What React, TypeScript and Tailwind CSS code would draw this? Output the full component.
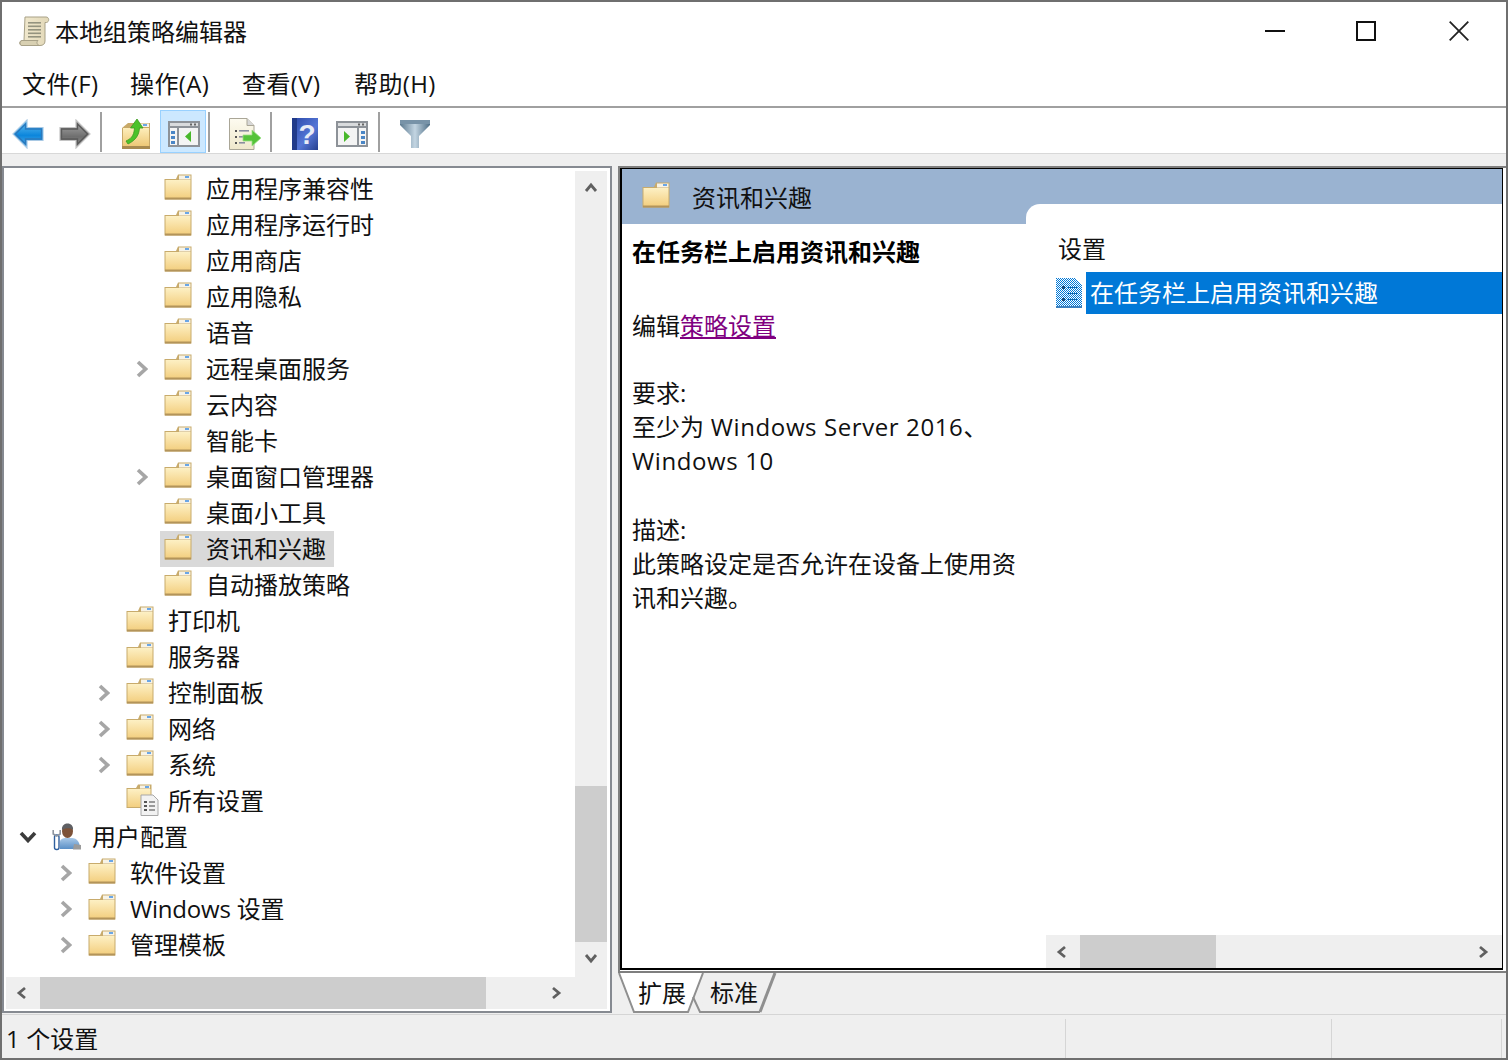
import React from "react";

const FONT = "font-['Open_Sans','Noto_Sans_CJK_SC',sans-serif]";

function Folder({ id = "f" }: { id?: string }) {
  return (
    <svg width="28" height="26" viewBox="0 0 28 26" className="shrink-0 block">
      <defs>
        <linearGradient id={id} x1="0" y1="0" x2="0" y2="1">
          <stop offset="0" stopColor="#fdf0c4" />
          <stop offset="1" stopColor="#f3cf80" />
        </linearGradient>
      </defs>
      <path d="M14 0.5H27.5V25.5H0.5V5H12Z" fill="#c8ab6c" />
      <rect x="15" y="1.5" width="11.5" height="4" fill="#f7f3e6" />
      <rect x="21" y="2" width="4" height="2" fill="#6aa6e6" />
      <path d="M1.5 6H13L15.5 6H26.5V24H1.5Z" fill={`url(#${id})`} />
      <rect x="1" y="23.5" width="26" height="2" fill="#b3945a" />
    </svg>
  );
}

function Chevron({ open, dim = true }: { open?: boolean; dim?: boolean }) {
  if (open)
    return (
      <svg width="18" height="12" viewBox="0 0 18 12" className="block">
        <path d="M2 2L9 9.5L16 2" fill="none" stroke="#3c3c3c" strokeWidth="3.6" />
      </svg>
    );
  return (
    <svg width="12" height="18" viewBox="0 0 12 18" className="block">
      <path d="M2 2L9.5 9L2 16" fill="none" stroke={dim ? "#a6a6a6" : "#606060"} strokeWidth="3.6" />
    </svg>
  );
}

function SmallArrow({ dir }: { dir: "l" | "r" | "u" | "d" }) {
  const d = { l: "M9 2L3 7L9 12", r: "M3 2L9 7L3 12", u: "M2 9L7 3L12 9", d: "M2 4L7 10L12 4" }[dir];
  return (
    <svg width="14" height="14" viewBox="0 0 14 14" className="block">
      <path d={d} fill="none" stroke="#606060" strokeWidth="2.8" />
    </svg>
  );
}

function AllSettingsIcon() {
  return (
    <svg width="34" height="32" viewBox="0 0 34 32" className="shrink-0 block">
      <defs>
        <linearGradient id="as" x1="0" y1="0" x2="0" y2="1">
          <stop offset="0" stopColor="#fdf0c4" />
          <stop offset="1" stopColor="#f3cf80" />
        </linearGradient>
      </defs>
      <path d="M12 0.5H25.5V24H0.5V4H10Z" fill="#c8ab6c" />
      <rect x="14" y="1.5" width="10" height="3" fill="#f7f3e6" />
      <rect x="19" y="2" width="4" height="2" fill="#6aa6e6" />
      <rect x="1.5" y="5" width="23" height="18" fill="url(#as)" />
      <path d="M15 11H27L32 16V31.5H15Z" fill="#f2f2f2" stroke="#a8a8a8" />
      <rect x="18" y="17" width="3" height="2" fill="#555" />
      <rect x="23" y="17" width="6" height="2" fill="#9a9a9a" />
      <rect x="18" y="21" width="3" height="2" fill="#555" />
      <rect x="23" y="21" width="6" height="2" fill="#9a9a9a" />
      <rect x="18" y="25" width="3" height="2" fill="#555" />
      <rect x="23" y="25" width="6" height="2" fill="#9a9a9a" />
    </svg>
  );
}

function UserIcon() {
  return (
    <svg width="30" height="30" viewBox="0 0 30 30" className="shrink-0 block">
      <defs>
        <linearGradient id="ub" x1="0" y1="0" x2="0" y2="1">
          <stop offset="0" stopColor="#a9c9e8" />
          <stop offset="1" stopColor="#5a8fc6" />
        </linearGradient>
      </defs>
      <path d="M8 28V21C8 18 11 17 14 17H20C25 17 28 21 28 28Z" fill="url(#ub)" />
      <path d="M22 23L29 24V28.5H21Z" fill="#9b9b9b" />
      <ellipse cx="15.5" cy="10" rx="5.5" ry="7" fill="#7d5238" />
      <path d="M10 9C9.5 4 13 2.5 15.5 2.5C19 2.5 21.5 5 21 9C19 6.5 13 6.5 10 9Z" fill="#5f6064" />
      <rect x="2.5" y="14" width="4.5" height="14.5" rx="2" fill="#fff" stroke="#2f5f9e" strokeWidth="1.4" />
      <path d="M1.2 9V13L4.7 15L8.2 13V9" fill="none" stroke="#8f96a0" strokeWidth="1.6" />
    </svg>
  );
}

function ScrollIcon() {
  return (
    <svg width="32" height="32" viewBox="0 0 32 32" className="block">
      <defs>
        <linearGradient id="sc" x1="0" y1="0" x2="1" y2="0">
          <stop offset="0" stopColor="#f2ead0" />
          <stop offset="1" stopColor="#e2d8b8" />
        </linearGradient>
      </defs>
      <path d="M7 2H28C31.5 2 31.5 7 28.5 7.5H27V26C27 29 25 30.5 22 30.5H4C1 30.5 1 25.5 4 25.5H6Z" fill="url(#sc)" stroke="#a8a187" />
      <path d="M4 25.5H20C18.5 27 18.5 29 21 30.5H4C1.5 30.5 1.5 26 4 25.5Z" fill="#d8d0b2" stroke="#a8a187" />
      <g fill="#94937f">
        <rect x="10" y="7" width="13" height="1.6" />
        <rect x="10" y="10.5" width="13" height="1.6" />
        <rect x="10" y="14" width="13" height="1.6" />
        <rect x="10" y="17.5" width="13" height="1.6" />
        <rect x="10" y="21" width="13" height="1.6" />
      </g>
    </svg>
  );
}

function BackIcon() {
  return (
    <svg width="32" height="30" viewBox="0 0 32 30" className="block mr-[3px]">
      <defs>
        <linearGradient id="bk" x1="0" y1="0" x2="0" y2="1">
          <stop offset="0" stopColor="#6cc4f4" />
          <stop offset="0.55" stopColor="#0b86dc" />
          <stop offset="1" stopColor="#5fb2e8" />
        </linearGradient>
      </defs>
      <path d="M1 15L15 1V8.5H31V21.5H15V29Z" fill="url(#bk)" stroke="#a9c9e4" strokeWidth="1.2" />
      <path d="M3.5 15L13.5 5V10H29.5V20H13.5V25Z" fill="none" stroke="#2a79bd" strokeWidth="1.4" />
    </svg>
  );
}

function ForwardIcon() {
  return (
    <svg width="32" height="30" viewBox="0 0 32 30" className="block mr-[1px]">
      <defs>
        <linearGradient id="fw" x1="0" y1="0" x2="0" y2="1">
          <stop offset="0" stopColor="#b0b0b0" />
          <stop offset="0.6" stopColor="#6e6e6e" />
          <stop offset="1" stopColor="#9a9a9a" />
        </linearGradient>
      </defs>
      <path d="M31 15L17 1V8.5H1V21.5H17V29Z" fill="url(#fw)" stroke="#c4c4c4" strokeWidth="1.2" />
      <path d="M28.5 15L18.5 5V10H2.5V20H18.5V25Z" fill="none" stroke="#5a5a5a" strokeWidth="1.4" />
    </svg>
  );
}

function FolderUpIcon() {
  return (
    <svg width="28" height="30" viewBox="0 0 28 30" className="block mr-[2px]">
      <defs>
        <linearGradient id="fu" x1="0" y1="0" x2="0" y2="1">
          <stop offset="0" stopColor="#fdeebb" />
          <stop offset="1" stopColor="#eec877" />
        </linearGradient>
      </defs>
      <path d="M6 4H28V30H0V9Z" fill="#c8a968" />
      <rect x="18" y="4.5" width="9" height="3.5" fill="#f7f3e6" />
      <rect x="21" y="5" width="4" height="2" fill="#6aa6e6" />
      <rect x="1" y="9" width="26" height="18" fill="url(#fu)" />
      <rect x="0" y="27" width="28" height="3" fill="#a88a50" />
      <path d="M4 22C8 20 12 18 12.5 9H8.5L15 0L21 9H17.5C17 16 14 21 6 25Z" fill="#4cc22a" stroke="#3c9a20" strokeWidth="0.8" />
    </svg>
  );
}

function PaneIcon({ flip }: { flip?: boolean }) {
  return (
    <svg width="32" height="26" viewBox="0 0 32 26" className="block ml-[2px]">
      <rect x="0" y="0" width="32" height="26" fill="#8d9298" />
      <rect x="2" y="2" width="28" height="3" fill="#d9dbdd" />
      <rect x="22" y="2.5" width="2" height="2" fill="#666" />
      <rect x="26" y="2.5" width="2" height="2" fill="#666" />
      <rect x="2" y="7" width="28" height="17" fill="#f4f4f4" />
      {flip ? (
        <g>
          <rect x="21" y="7" width="2" height="17" fill="#8d9298" />
          <rect x="25" y="10" width="4" height="3" fill="#4a86c6" />
          <rect x="25" y="15" width="4" height="3" fill="#4a86c6" />
          <rect x="25" y="20" width="4" height="3" fill="#4a86c6" />
          <path d="M8 10L14 15.5L8 21Z" fill="#48b82a" />
        </g>
      ) : (
        <g>
          <rect x="9" y="7" width="2" height="17" fill="#8d9298" />
          <rect x="3" y="10" width="4" height="3" fill="#4a86c6" />
          <rect x="3" y="15" width="4" height="3" fill="#4a86c6" />
          <rect x="3" y="20" width="4" height="3" fill="#4a86c6" />
          <path d="M23 10L17 15.5L23 21Z" fill="#48b82a" />
        </g>
      )}
    </svg>
  );
}

function ExportIcon() {
  return (
    <svg width="32" height="32" viewBox="0 0 32 32" className="block ml-[4px]">
      <defs>
        <linearGradient id="ex" x1="0" y1="0" x2="0" y2="1">
          <stop offset="0" stopColor="#fdfbf0" />
          <stop offset="1" stopColor="#efe8cc" />
        </linearGradient>
      </defs>
      <path d="M0.5 0.5H18L25 7.5V31.5H0.5Z" fill="url(#ex)" stroke="#aaa697" />
      <path d="M18 0.5V7.5H25" fill="#d8d8d8" stroke="#aaa697" />
      <g fill="#555">
        <rect x="6" y="12" width="2" height="2" />
        <rect x="6" y="18" width="2" height="2" />
        <rect x="6" y="24" width="2" height="2" />
      </g>
      <g fill="#8b8fa0">
        <rect x="10" y="12" width="10" height="1.6" />
        <rect x="10" y="18" width="6" height="1.6" />
        <rect x="10" y="24" width="6" height="1.6" />
      </g>
      <path d="M14 17H23V12L32 20L23 28V23H14Z" fill="#55c33a" stroke="#9adf86" strokeWidth="0.8" />
    </svg>
  );
}

function HelpIcon() {
  return (
    <svg width="26" height="32" viewBox="0 0 26 32" className="block">
      <defs>
        <linearGradient id="hp" x1="0" y1="0" x2="1" y2="1">
          <stop offset="0" stopColor="#2948a8" />
          <stop offset="0.6" stopColor="#5576d6" />
          <stop offset="1" stopColor="#26408f" />
        </linearGradient>
      </defs>
      <rect x="0" y="0" width="26" height="32" fill="url(#hp)" />
      <rect x="0" y="0" width="5" height="32" fill="#203a8a" />
      <text x="15" y="26" textAnchor="middle" fontSize="28" fontWeight="700" fontFamily="Liberation Sans" fill="#e8ecf6">?</text>
    </svg>
  );
}

function FilterIcon() {
  return (
    <svg width="30" height="28" viewBox="0 0 30 28" className="block">
      <defs>
        <linearGradient id="fl" x1="0" y1="0" x2="1" y2="0">
          <stop offset="0" stopColor="#5c7a90" />
          <stop offset="0.5" stopColor="#c3d5e2" />
          <stop offset="1" stopColor="#4d6d85" />
        </linearGradient>
      </defs>
      <path d="M0 0H30V5L19 16V28H11V16L0 5Z" fill="url(#fl)" />
      <path d="M0 0H30V4H0Z" fill="#7893a8" />
    </svg>
  );
}

function PolicyIcon() {
  return (
    <svg width="26" height="30" viewBox="0 0 26 30" className="block shrink-0">
      <defs>
        <pattern id="dit" width="2" height="2" patternUnits="userSpaceOnUse">
          <rect width="2" height="2" fill="#ffffff" />
          <rect width="1" height="1" fill="#0078d7" />
          <rect x="1" y="1" width="1" height="1" fill="#0078d7" />
        </pattern>
      </defs>
      <path d="M0 0H19L26 7V30H0Z" fill="url(#dit)" />
      <rect x="0" y="28" width="26" height="2" fill="#3a7fbe" />
      <rect x="6" y="8" width="3" height="3" fill="#1a4a78" />
      <rect x="6" y="20" width="3" height="3" fill="#1a4a78" />
      <rect x="12" y="9" width="9" height="1" fill="#0b66b0" />
      <rect x="12" y="15" width="9" height="1" fill="#0b66b0" />
      <rect x="12" y="21" width="9" height="1" fill="#0b66b0" />
    </svg>
  );
}

const PAD: Record<number, string> = { 0: "pl-[2px]", 1: "pl-[40px]", 2: "pl-[78px]", 3: "pl-[116px]" };

type Row = { t: string; l: number; c?: boolean; open?: boolean; sel?: boolean; icon?: "user" | "all"; narrow?: boolean };

const rows: Row[] = [
  { t: "应用程序兼容性", l: 3 },
  { t: "应用程序运行时", l: 3 },
  { t: "应用商店", l: 3 },
  { t: "应用隐私", l: 3 },
  { t: "语音", l: 3 },
  { t: "远程桌面服务", l: 3, c: true },
  { t: "云内容", l: 3 },
  { t: "智能卡", l: 3 },
  { t: "桌面窗口管理器", l: 3, c: true },
  { t: "桌面小工具", l: 3 },
  { t: "资讯和兴趣", l: 3, sel: true },
  { t: "自动播放策略", l: 3 },
  { t: "打印机", l: 2 },
  { t: "服务器", l: 2 },
  { t: "控制面板", l: 2, c: true },
  { t: "网络", l: 2, c: true },
  { t: "系统", l: 2, c: true },
  { t: "所有设置", l: 2, icon: "all" },
  { t: "用户配置", l: 0, open: true, icon: "user" },
  { t: "软件设置", l: 1, c: true },
  { t: "Windows 设置", l: 1, c: true, narrow: true },
  { t: "管理模板", l: 1, c: true },
];

function TreeRow({ r, i }: { r: Row; i: number }) {
  return (
    <div className={`flex h-[36px] items-center ${PAD[r.l]}`}>
      <div className="flex h-full w-[40px] shrink-0 items-center justify-center">
        {r.c && <Chevron />}
        {r.open && <Chevron open />}
      </div>
      <div className={`ml-[-2px] flex h-full items-center pl-[4px] pr-[8px] ${r.sel ? "bg-[#d9d9d9]" : ""}`}>
        {r.icon === "user" ? (
          <div className="mb-[2px] mr-[10px] ml-[2px]"><UserIcon /></div>
        ) : r.icon === "all" ? (
          <div className="mb-[2px] mr-[8px]"><AllSettingsIcon /></div>
        ) : (
          <div className="mb-[4px] mr-[14px]"><Folder id={`fg${i}`} /></div>
        )}
        <span className={`whitespace-nowrap text-[24px] leading-[36px] text-[#111] ${r.narrow ? "tracking-[-0.2px]" : ""}`}>{r.t}</span>
      </div>
    </div>
  );
}

function Tool({ children, active }: { children: React.ReactNode; active?: boolean }) {
  return (
    <div className={`flex h-[43px] w-[46px] items-center justify-center pt-[4px] ${active ? "border border-[#99d1ff] bg-[#cce8ff]" : ""}`}>
      {children}
    </div>
  );
}

function Sep({ cls }: { cls: string }) {
  return <div className={`h-[40px] w-[2px] bg-[#a0a0a0] ${cls}`} />;
}

export default function App() {
  return (
    <div className={`flex h-[1060px] w-[1508px] flex-col overflow-hidden border-x-2 border-y-2 border-[#6f6f6f] bg-[#efefef] ${FONT}`}>
      {/* title */}
      <div className="flex h-[58px] items-center bg-white">
        <div className="ml-[16px] mr-[5px]"><ScrollIcon /></div>
        <span className="mt-[1px] text-[24px] leading-[32px] text-[#111]">本地组策略编辑器</span>
        <div className="ml-auto flex items-center">
          <svg width="20" height="20" viewBox="0 0 20 20" className="block"><rect x="0" y="9" width="20" height="2" fill="#111" /></svg>
          <svg width="20" height="20" viewBox="0 0 20 20" className="ml-[71px] block"><rect x="1" y="1" width="18" height="18" fill="none" stroke="#111" strokeWidth="2" /></svg>
          <svg width="20" height="20" viewBox="0 0 20 20" className="ml-[73px] mr-[37px] block"><path d="M0.7 0.7L19.3 19.3M19.3 0.7L0.7 19.3" stroke="#222" strokeWidth="1.8" /></svg>
        </div>
      </div>
      {/* menu */}
      <div className="flex h-[46px] items-start bg-white pl-[20px] pt-[6px] text-[24px] leading-[36px] tracking-[0.4px] text-[#111]">
        <span className="w-[108px]">文件(F)</span>
        <span className="w-[112px]">操作(A)</span>
        <span className="w-[112px]">查看(V)</span>
        <span>帮助(H)</span>
      </div>
      <div className="h-[2px] bg-[#a0a0a0]" />
      {/* toolbar */}
      <div className="flex h-[45px] items-end border-b-0 bg-white pl-[4px]">
        <Tool><BackIcon /></Tool>
        <Tool><ForwardIcon /></Tool>
        <Sep cls="ml-[2px] mb-[1px]" />
        <div className="ml-[12px]"><Tool><FolderUpIcon /></Tool></div>
        <Tool active><PaneIcon /></Tool>
        <Sep cls="ml-[2px] mb-[1px]" />
        <div className="ml-[10px]"><Tool><ExportIcon /></Tool></div>
        <Sep cls="ml-[4px] mb-[1px]" />
        <div className="ml-[10px]"><Tool><HelpIcon /></Tool></div>
        <Tool><PaneIcon flip /></Tool>
        <Sep cls="ml-[4px] mb-[1px]" />
        <div className="ml-[12px]"><Tool><FilterIcon /></Tool></div>
      </div>
      <div className="h-[13px] border-t border-[#d8d8d8] bg-[#efefef]" />
      {/* main */}
      <div className="flex h-[848px]">
        {/* left panel */}
        <div className="mb-[1px] flex w-[610px] flex-col border-2 border-[#868a91] bg-white pl-[2px] pr-[3px] pt-[3px] pb-[2px]">
          <div className="flex min-h-0 flex-1">
            <div className="min-w-0 flex-1 overflow-hidden">
              {rows.map((r, i) => (
                <TreeRow key={r.t} r={r} i={i} />
              ))}
            </div>
            <div className="flex w-[32px] flex-col bg-[#efefef]">
              <div className="flex h-[36px] items-center justify-center"><SmallArrow dir="u" /></div>
              <div className="flex-1" />
              <div className="h-[156px] bg-[#cdcdcd]" />
              <div className="flex h-[32px] items-center justify-center pb-[1px]"><SmallArrow dir="d" /></div>
              <div className="h-[3px]" />
            </div>
          </div>
          <div className="flex h-[32px] items-center bg-[#efefef]">
            <div className="flex h-full w-[34px] items-center justify-center"><SmallArrow dir="l" /></div>
            <div className="h-full w-[446px] bg-[#cdcdcd]" />
            <div className="ml-[53px] flex h-full w-[36px] items-center justify-center"><SmallArrow dir="r" /></div>
          </div>
        </div>
        {/* right */}
        <div className="ml-[6px] flex min-w-0 flex-1 flex-col">
          <div className="flex h-[807px] border-y-2 border-l-2 border-[#7f7f7f] bg-white pr-[3px] pb-[1px]">
            <div className="flex min-w-0 flex-1 border-y border-l-2 border-r border-black border-b-2">
              <div className="flex w-[404px] shrink-0 flex-col">
                <div className="flex h-[55px] items-start bg-[#9ab3d1] pl-[20px] pt-[13px]">
                  <Folder id="fh" />
                  <span className="ml-[22px] mt-[-1px] text-[24px] leading-[34px] text-[#111]">资讯和兴趣</span>
                </div>
                <div className="pl-[10px] pr-[8px] pt-[11px] text-[24px] leading-[34px] text-[#111]">
                  <div className="font-bold text-black">在任务栏上启用资讯和兴趣</div>
                  <div className="mt-[40px]">编辑<span className="text-[#800080] underline">策略设置</span></div>
                  <div className="mt-[33px]">要求:</div>
                  <div>至少为<span className="tracking-[0.6px]"> Windows Server 2016</span>、</div>
                  <div className="tracking-[0.6px]">Windows 10</div>
                  <div className="mt-[35px]">描述:</div>
                  <div>此策略设定是否允许在设备上使用资</div>
                  <div>讯和兴趣。</div>
                </div>
              </div>
              <div className="flex min-w-0 flex-1 flex-col bg-[#9ab3d1]">
                <div className="h-[35px] shrink-0" />
                <div className="flex min-h-0 flex-1 flex-col rounded-tl-[14px] bg-white">
                  <div className="ml-[32px] mt-[28px] text-[24px] leading-[34px] text-[#111]">设置</div>
                  <div className="ml-[30px] mt-[6px] flex h-[42px] items-center">
                    <PolicyIcon />
                    <div className="ml-[4px] h-full flex-1 bg-[#0078d7] pl-[4px] text-[24px] leading-[42px] text-white">在任务栏上启用资讯和兴趣</div>
                  </div>
                  <div className="ml-[20px] mt-auto flex h-[33px] bg-[#efefef]">
                    <div className="flex h-full w-[34px] items-center justify-center"><SmallArrow dir="l" /></div>
                    <div className="h-full w-[136px] bg-[#cdcdcd]" />
                    <div className="ml-auto flex h-full w-[36px] items-center justify-center"><SmallArrow dir="r" /></div>
                  </div>
                </div>
              </div>
            </div>
          </div>
          {/* tabs */}
          <div className="relative flex h-[41px] items-start pl-[20px] text-[24px] leading-[40px] text-[#111]">
            <svg width="170" height="41" viewBox="0 0 170 41" className="absolute left-0 top-0">
              <path d="M81 0H157L142 39H88L81 22Z" fill="#efefef" />
              <path d="M0 0H85L70 39H16Z" fill="#ffffff" />
              <path d="M1 0L16 39H70L85 0" fill="none" stroke="#8f8f8f" strokeWidth="2" />
              <path d="M75 24L82 39H142" fill="none" stroke="#8f8f8f" strokeWidth="2" />
              <path d="M142 39L157 0" fill="none" stroke="#8f8f8f" strokeWidth="3" />
            </svg>
            <span className="relative">扩展</span>
            <span className="relative ml-[24px]">标准</span>
          </div>
        </div>
      </div>
      {/* status */}
      <div className="flex h-[44px] items-center border-t border-[#d5d5d5] bg-[#efefef] text-[24px] text-[#111]">
        <span className="ml-[4px] mt-[3px] w-[1059px] leading-[41px] tracking-[0.1px]">1 个设置</span>
        <div className="h-[39px] w-[1px] self-end bg-[#d5d5d5]" />
        <div className="h-[39px] w-[1px] self-end bg-[#d5d5d5] ml-[265px]" />
        <div className="h-[39px] w-[1px] self-end bg-[#d5d5d5] ml-[169px]" />
      </div>
    </div>
  );
}
